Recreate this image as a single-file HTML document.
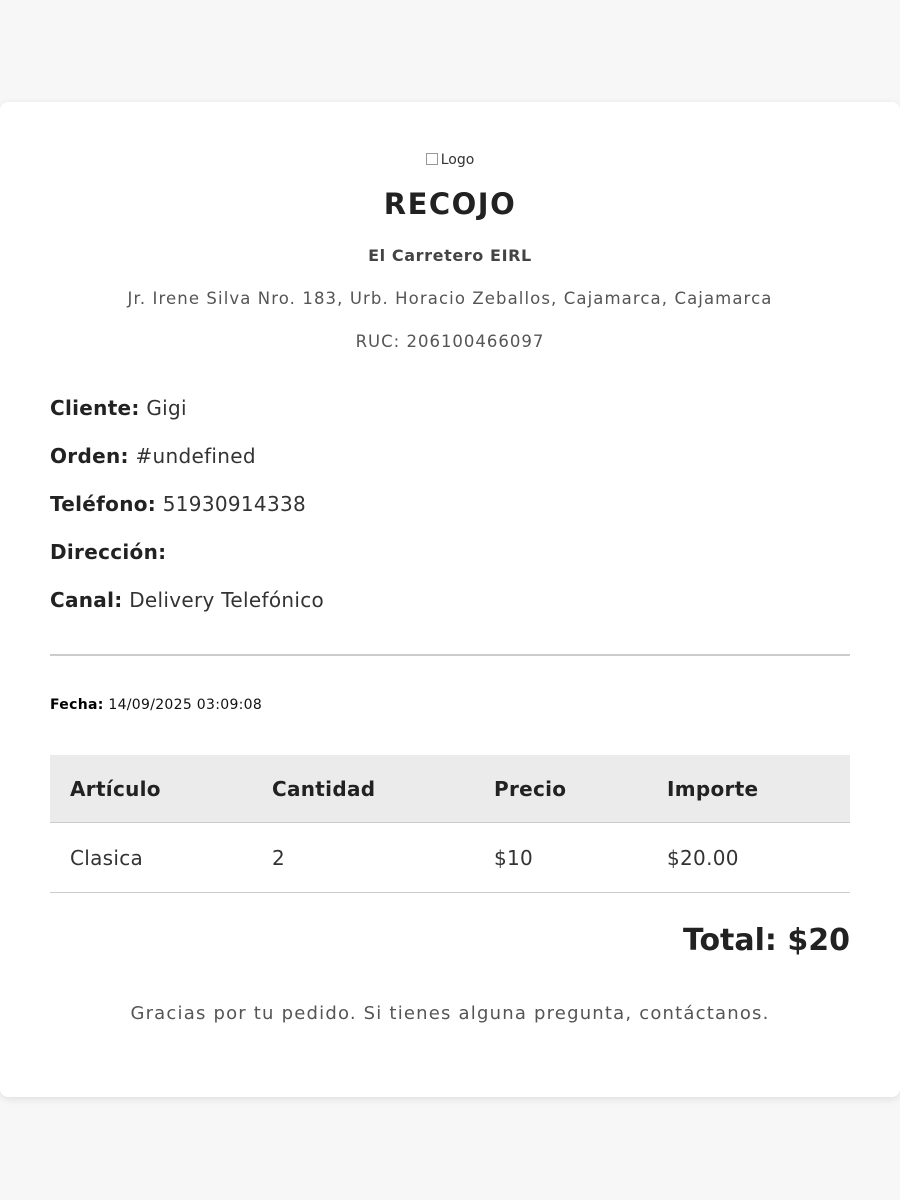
<!DOCTYPE html>
<html><head><meta charset="utf-8"><style>
*{box-sizing:border-box;margin:0;padding:0}
body{width:900px;height:1200px;background:#f7f7f7;font-family:"DejaVu Sans","Liberation Sans",sans-serif;color:#333;position:relative}
.card{position:absolute;left:0;top:102px;width:900px;height:995px;background:#fff;border-radius:8px;box-shadow:0 2px 8px rgba(0,0,0,.1)}
.c{position:absolute;left:0;width:900px;text-align:center;white-space:nowrap}
.l{position:absolute;left:50px;white-space:nowrap;font-size:20px;color:#333;letter-spacing:.3px}
.l b{color:#222}
.th{position:absolute;left:50px;top:653px;width:800px;height:68px;background:#ebebeb;border-bottom:1px solid #ccc}
.tr{position:absolute;left:50px;top:722px;width:800px;height:69px;border-bottom:1px solid #ccc}
.th span,.tr span{position:absolute;top:22px;font-size:20px;white-space:nowrap;letter-spacing:.3px}
.th span{font-weight:bold;color:#222}
</style></head><body>
<div class="card">
<div class="c" style="top:50px;font-size:14px;color:#333"><span style="display:inline-block;width:12px;height:12px;border:1px solid #999;vertical-align:-1px;margin-right:3px"></span>Logo</div>
<div class="c" style="top:85px;font-size:29px;font-weight:bold;color:#222;letter-spacing:1.5px">RECOJO</div>
<div class="c" style="top:144px;font-size:16px;font-weight:bold;color:#444;letter-spacing:.6px">El Carretero EIRL</div>
<div class="c" style="top:187px;font-size:16.5px;color:#555;letter-spacing:1.1px">Jr. Irene Silva Nro. 183, Urb. Horacio Zeballos, Cajamarca, Cajamarca</div>
<div class="c" style="top:230px;font-size:16.5px;color:#555;letter-spacing:1px">RUC: 206100466097</div>
<div class="l" style="top:294px"><b>Cliente:</b> Gigi</div>
<div class="l" style="top:342px"><b>Orden:</b> #undefined</div>
<div class="l" style="top:390px"><b>Teléfono:</b> 51930914338</div>
<div class="l" style="top:438px"><b>Dirección:</b></div>
<div class="l" style="top:486px"><b>Canal:</b> Delivery Telefónico</div>
<div style="position:absolute;left:50px;top:552px;width:800px;border-top:2px solid #ccc"></div>
<div class="l" style="top:595px;font-size:14px;color:#111"><b style="color:#000">Fecha:</b> 14/09/2025 03:09:08</div>
<div class="th"><span style="left:20px">Artículo</span><span style="left:222px">Cantidad</span><span style="left:444px">Precio</span><span style="left:617px">Importe</span></div>
<div class="tr"><span style="left:20px">Clasica</span><span style="left:222px">2</span><span style="left:444px">$10</span><span style="left:617px">$20.00</span></div>
<div style="position:absolute;right:50px;top:821px;font-size:30px;font-weight:bold;color:#222">Total: $20</div>
<div class="c" style="top:901px;font-size:18px;color:#555;letter-spacing:1.2px">Gracias por tu pedido. Si tienes alguna pregunta, contáctanos.</div>
</div>
</body></html>
